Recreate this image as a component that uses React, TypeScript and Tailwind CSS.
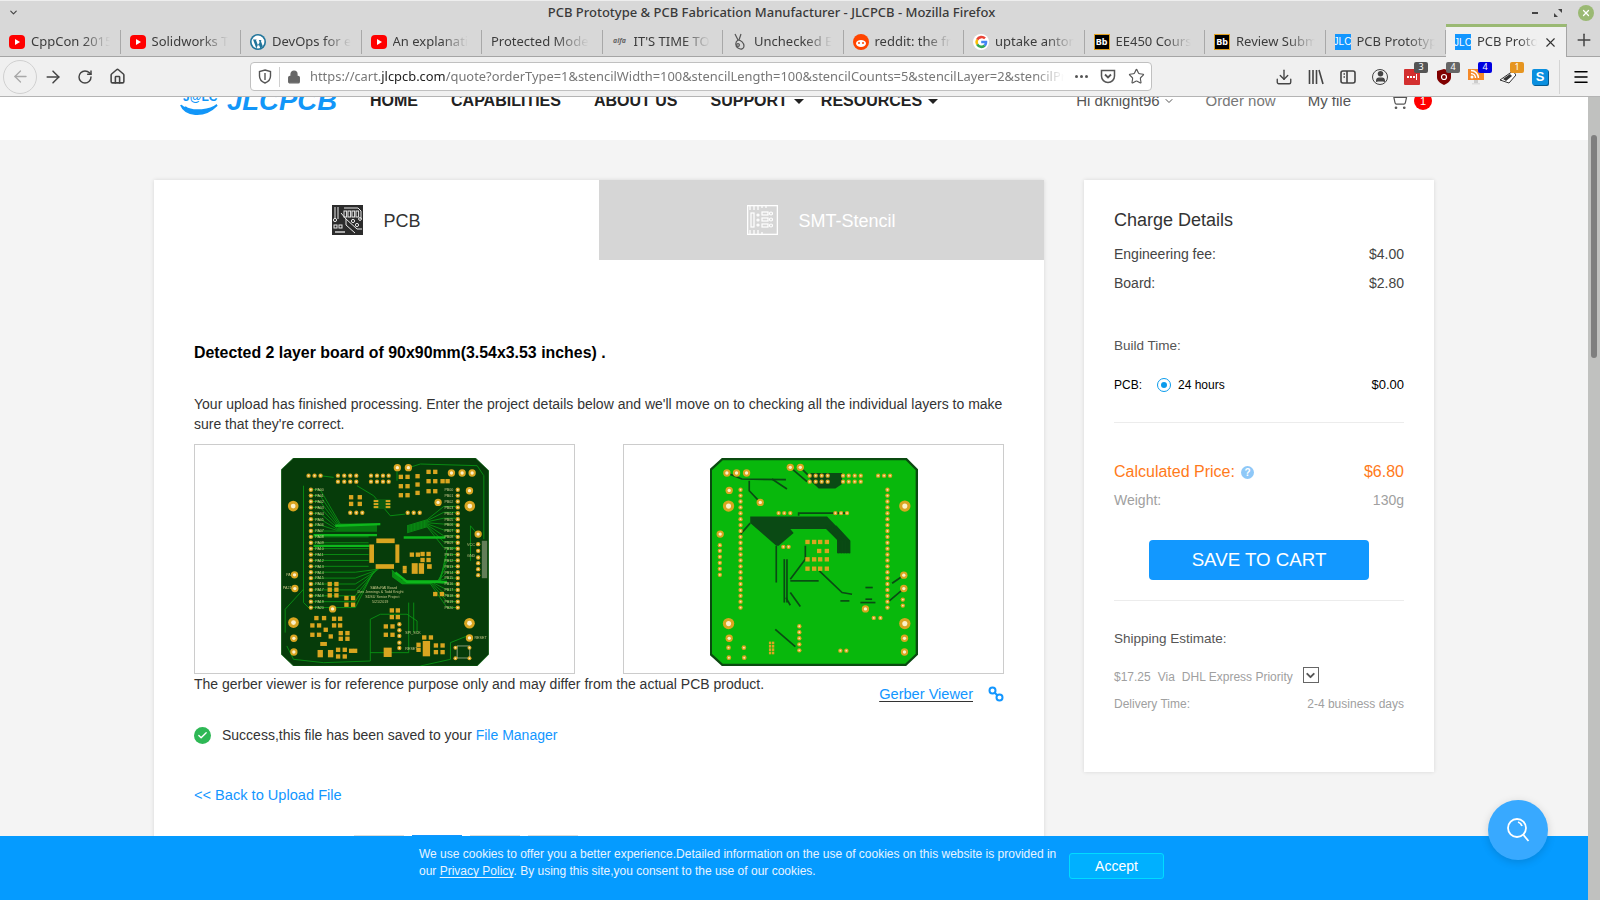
import {
  ArrowLeft,
  ArrowRight,
  RotateCw,
  Home,
  Lock,
  Star,
  Download,
  User,
  Menu,
  X,
  Plus,
  ChevronDown,
  ShoppingCart,
  Check,
} from "lucide-react";

const sans = "font-['Liberation_Sans',Arial,sans-serif]";
const ui = "font-['Noto_Sans',sans-serif]";

function YouTubeIcon() {
  return (
    <svg width="16" height="16" viewBox="0 0 16 16">
      <rect x="0" y="1" width="16" height="14" rx="4" fill="#f00" />
      <path d="M6 5l5 3-5 3z" fill="#fff" />
    </svg>
  );
}

function WordpressIcon() {
  return (
    <svg width="16" height="16" viewBox="0 0 16 16">
      <circle cx="8" cy="8" r="8" fill="#21759b" />
      <circle cx="8" cy="8" r="6.4" fill="#fff" />
      <path d="M3 5.5h4l-1 .6 2.2 6 1.4-4-.8-2h3l-1 .6 2 5.5-2.4 2.4-2-5-2 5-3-8z" fill="#21759b" />
    </svg>
  );
}

function AlfaIcon() {
  return (
    <span className="flex w-[16px] justify-center text-[7px] font-bold italic text-[#666]">alfa</span>
  );
}

function BadgerIcon() {
  return (
    <svg width="16" height="18" viewBox="0 0 16 18" fill="none" stroke="#555" strokeWidth="1.2">
      <path d="M3 1l3 6M9 1l-2 6M6 7c-3 2-3 6 0 8s6 1 6-2-3-6-6-6z" />
      <circle cx="6" cy="12" r="1.4" />
    </svg>
  );
}

function RedditIcon() {
  return (
    <svg width="16" height="16" viewBox="0 0 16 16">
      <circle cx="8" cy="8" r="8" fill="#ff4500" />
      <ellipse cx="8" cy="9.5" rx="5" ry="3.4" fill="#fff" />
      <circle cx="6" cy="9" r="1" fill="#ff4500" />
      <circle cx="10" cy="9" r="1" fill="#ff4500" />
    </svg>
  );
}

function GoogleIcon() {
  return (
    <svg width="16" height="16" viewBox="0 0 16 16" fill="none" strokeWidth="2.6">
      <circle cx="8" cy="8" r="8" fill="#fff" />
      <path d="M12 4.4A5 5 0 0 0 4.2 5.6" stroke="#ea4335" />
      <path d="M4.2 5.6a5 5 0 0 0 0 4.8" stroke="#fbbc05" />
      <path d="M4.2 10.4a5 5 0 0 0 7.6 1.2" stroke="#34a853" />
      <path d="M11.8 11.6A5 5 0 0 0 13 8H8.2" stroke="#4285f4" />
    </svg>
  );
}

function BlackboardIcon() {
  return (
    <span className="flex h-[16px] w-[16px] items-center justify-center border border-[#e0a020] bg-black text-[9px] font-bold text-white">
      Bb
    </span>
  );
}

function JlcIcon() {
  return (
    <span className={`${sans} flex h-[16px] w-[16px] shrink-0 items-center justify-center overflow-hidden bg-[#1296ff] text-[10px] text-white`}>
      JLC
    </span>
  );
}

const tabs = [
  { title: "CppCon 2015", icon: <YouTubeIcon /> },
  { title: "Solidworks T", icon: <YouTubeIcon /> },
  { title: "DevOps for e", icon: <WordpressIcon /> },
  { title: "An explanati", icon: <YouTubeIcon /> },
  { title: "Protected Mode", icon: null },
  { title: "IT'S TIME TO", icon: <AlfaIcon /> },
  { title: "Unchecked E", icon: <BadgerIcon /> },
  { title: "reddit: the fr", icon: <RedditIcon /> },
  { title: "uptake anton", icon: <GoogleIcon /> },
  { title: "EE450 Cours", icon: <BlackboardIcon /> },
  { title: "Review Subm", icon: <BlackboardIcon /> },
  { title: "PCB Prototyp", icon: <JlcIcon /> },
];

function Gold({ x, y, r = 6.5 }: { x: number; y: number; r?: number }) {
  return (
    <g>
      <circle cx={x} cy={y} r={r} fill="#d9a520" />
      <circle cx={x} cy={y} r={r * 0.42} fill="#f6e6b0" />
    </g>
  );
}

function Hole({ x, y, r = 14 }: { x: number; y: number; r?: number }) {
  return (
    <g>
      <circle cx={x} cy={y} r={r} fill="#d9a520" />
      <circle cx={x} cy={y} r={r * 0.45} fill="#fbf1c8" />
    </g>
  );
}

function Smd({ x, y, w = 13, h = 13 }: { x: number; y: number; w?: number; h?: number }) {
  return <rect x={x} y={y} width={w} height={h} fill="#d9a520" />;
}

const padRows = Array.from({ length: 21 }, (_, i) => 132 + i * 17.65);

const topSmds = [
  [385, 87], [405, 87], [385, 115], [405, 115], [385, 142], [405, 142], [468, 72], [488, 72], [468, 100], [488, 100],
  [468, 130], [488, 130], [435, 85], [435, 110], [435, 135], [510, 100], [525, 100], [236, 148], [262, 148], [236, 168], [262, 168],
  [172, 408], [192, 408], [172, 425], [192, 425], [172, 442], [192, 442], [222, 450], [242, 450], [222, 470], [242, 470],
  [418, 320], [436, 320], [450, 318], [468, 318], [450, 336], [468, 336], [488, 438], [508, 438],
  [358, 487], [376, 487], [358, 507], [376, 507], [132, 510], [155, 510], [120, 532], [140, 532], [120, 560], [140, 560],
  [185, 512], [203, 512], [185, 532], [203, 532], [160, 545], [175, 565], [205, 555], [225, 555], [205, 572], [225, 572],
  [340, 535], [360, 535], [340, 560], [360, 560], [490, 592], [510, 592], [490, 612], [510, 612], [455, 568], [475, 568],
  [438, 590], [438, 605], [197, 605], [217, 605], [197, 625], [217, 625], [236, 608], [248, 608],
];

function TopBoard() {
  return (
    <svg width="208" height="208" viewBox="33 37 622 623">
      <polygon points="70,37 615,37 655,75 655,625 620,660 70,660 33,625 33,72" fill="#063c0a" stroke="#0f6a14" strokeWidth="2" />
      <g fill="none" stroke="#0a9a14" strokeWidth="2.5">
        {padRows.slice(0, 8).map((y, i) => (
          <polyline key={`a${i}`} points={`122,${y} 150,${y} ${210 - i * 2},${235 + i * 3} 320,${235 + i * 3}`} />
        ))}
        {padRows.slice(8, 14).map((y, i) => (
          <polyline key={`b${i}`} points={`122,${y} 295,${y}`} />
        ))}
        {padRows.slice(14).map((y, i) => (
          <polyline key={`c${i}`} points={`122,${y} 255,${y} ${325 - i * 3},${370 + i * 2}`} />
        ))}
        {padRows.slice(0, 8).map((y, i) => (
          <polyline key={`d${i}`} points={`562,${y + 50} 520,${y + 50} 470,${222 + i * 3} 410,${240 + i * 3}`} />
        ))}
        {padRows.slice(10).map((y, i) => (
          <polyline key={`e${i}`} points={`562,${y} 530,${y} ${510 - i * 3},${404 + i} 395,${404 + i} 365,${372 + i * 2}`} />
        ))}
        <polyline points="100,120 100,470 120,490" />
        <polyline points="45,560 45,490 100,430" />
        <polyline points="50,600 70,640 160,650 300,645 300,520 330,505 410,505 440,525 440,560" />
        <polyline points="450,660 540,640 540,590 590,570" />
        <polyline points="625,270 600,240 600,345" />
        <polyline points="415,66 450,55 620,60 640,90 640,280" />
        <polyline points="380,66 380,105" />
        <polyline points="150,90 190,95" />
        <polyline points="260,120 310,150 360,210 405,205" />
        <polyline points="300,620 415,620 415,470" />
        <polyline points="430,470 430,560" />
      </g>
      <g fill="none" stroke="#0eb81c" strokeWidth="7">
        <polyline points="130,268 320,268" />
        <polyline points="130,300 297,300" />
        <polyline points="400,275 525,275" />
        <polyline points="195,240 330,235" />
        <polyline points="375,380 410,408 530,408" />
      </g>
      <g fill="#eadfa0" fontSize="11" fontFamily="Liberation Sans, sans-serif" opacity="0.85">
        {padRows.map((y, i) => (
          <text key={i} x="135" y={y + 4}>{`PA${String(i).padStart(2, "0")}`}</text>
        ))}
        {padRows.map((y, i) => (
          <text key={i} x="522" y={y + 4}>{`PB${String(i).padStart(2, "0")}`}</text>
        ))}
        <text x="262" y="442">Dev Jennings & Todd Knight</text>
        <text x="300" y="430">SAMuRAI Board</text>
        <text x="285" y="456">SDSU Senior Project</text>
        <text x="305" y="470">5/21/2019</text>
        <text x="590" y="300">VCC</text>
        <text x="590" y="335">GND</text>
        <text x="48" y="390">PA20</text>
        <text x="38" y="430">PA21</text>
        <text x="405" y="563">SPI_SCK</text>
        <text x="405" y="612">RESET</text>
        <text x="612" y="578">RESET</text>
      </g>
      {padRows.map((y) => (
        <g key={y}>
          <Gold x={122} y={y} />
          <Gold x={562} y={y} />
        </g>
      ))}
      {[115, 133, 151, 203, 222, 240, 258, 302, 320, 338, 355].map((x) => (
        <Gold key={x} x={x} y={90} />
      ))}
      {[203, 222, 240, 258, 302, 320, 338, 355].map((x) => (
        <Gold key={x} x={x} y={108} />
      ))}
      {[240, 258, 276, 412, 430, 448].map((x) => (
        <Gold key={x} x={x} y={201} />
      ))}
      {[295, 315, 335, 352, 370, 388].map((y) => (
        <Gold key={y} x={623} y={y} />
      ))}
      <rect x="634" y="285" width="16" height="112" fill="#8a9a7a" opacity="0.7" />
      {[535, 553, 570, 590, 606].map((y) => (
        <Gold key={y} x={387} y={y} />
      ))}
      {[[381, 66], [414, 66], [543, 82], [575, 82], [605, 82], [597, 135], [503, 170], [623, 265], [73, 387], [74, 428], [187, 489], [71, 577], [597, 576], [71, 618]].map(([x, y]) => (
        <Hole key={`${x}-${y}`} x={x} y={y} r={11} />
      ))}
      {[[69, 181], [598, 181], [70, 530], [597, 532]].map(([x, y]) => (
        <Hole key={`${x}-${y}`} x={x} y={y} r={16} />
      ))}
      <rect x="318" y="278" width="55" height="14" fill="#d9a520" />
      <rect x="297" y="296" width="14" height="55" fill="#d9a520" />
      <rect x="375" y="296" width="12" height="55" fill="#d9a520" />
      <rect x="316" y="355" width="55" height="14" fill="#d9a520" />
      <rect x="310" y="160" width="50" height="30" fill="#0c5a10" />
      {[163, 172, 181].map((y) => (
        <g key={y}>
          <Smd x={310} y={y} w={14} h={6} />
          <Smd x={346} y={y} w={14} h={6} />
        </g>
      ))}
      <Smd x={424} y={352} w={18} h={32} />
      <Smd x={445} y={352} w={16} h={32} />
      <Smd x={470} y={355} w={14} h={14} />
      <Smd x={397} y={360} w={12} h={12} />
      <Smd x={397} y={372} w={12} h={10} />
      <Smd x={340} y={605} w={24} h={28} />
      {[[142, 612], [173, 612]].map(([x, y]) => (
        <Smd key={x} x={x} y={y} w={16} h={22} />
      ))}
      <Smd x={150} y={588} w={20} h={12} />
      <Smd x={457} y={585} w={22} h={46} />
      {topSmds.map(([x, y]) => (
        <Smd key={`${x}-${y}`} x={x} y={y} />
      ))}
      <g fill="none" stroke="#bfc7a8" strokeWidth="2">
        <rect x="560" y="600" width="38" height="36" />
      </g>
      {[[555, 605], [597, 605], [555, 637], [597, 637]].map(([x, y]) => (
        <Gold key={`${x}-${y}`} x={x} y={y} r={6} />
      ))}
    </svg>
  );
}

function BottomBoard() {
  return (
    <svg width="208" height="208" viewBox="45 37 622 623">
      <polygon points="82,40 632,40 664,72 664,625 630,657 82,657 47,625 47,72" fill="#08b80c" stroke="#0a4a10" strokeWidth="7" />
      <polygon points="165,212 395,212 465,285 465,322 425,322 425,282 392,250 285,250 295,262 250,300 243,300 165,232" fill="#0a4a14" />
      <polygon points="345,82 440,82 440,115 420,128 370,128 345,105" fill="#0a4a14" />
      <g fill="none" stroke="#0a4a14" strokeWidth="5">
        <polyline points="95,82 140,100 272,102" />
        <polyline points="230,100 275,130" />
        <polyline points="162,105 162,135 195,170" />
        <polyline points="285,65 335,108" />
        <polyline points="315,65 358,108" />
        <polyline points="136,265 165,232" />
        <polyline points="310,210 310,202 450,202" />
        <polyline points="243,300 243,410" />
        <polyline points="267,340 267,470" />
        <polyline points="275,340 275,470" />
        <polyline points="285,405 370,405" />
        <polyline points="285,400 330,340 330,300" />
        <polyline points="285,440 315,482" />
        <polyline points="272,455 285,478" />
        <polyline points="372,375 440,440 470,445" />
        <polyline points="240,550 300,602" />
        <polyline points="510,425 532,425" />
        <polyline points="435,465 462,465" />
        <polyline points="495,470 540,470" />
        <polyline points="510,460 530,460" />
        <polyline points="625,388 590,412" />
        <polyline points="625,428 578,468" />
      </g>
      <g fill="none" stroke="#0a4a14" strokeWidth="3">
        {[430, 438, 446, 454, 462].map((x) => (
          <polyline key={x} points={`${x - 40},240 ${x},285 ${x},322`} />
        ))}
      </g>
      {padRows.map((y) => (
        <g key={y}>
          <Gold x={136} y={y} />
          <Gold x={576} y={y} />
        </g>
      ))}
      {[[95, 82], [124, 82], [154, 82], [285, 65], [315, 65], [102, 134], [195, 170], [75, 265], [625, 388], [625, 428], [510, 489], [102, 577], [627, 577], [627, 618]].map(([x, y]) => (
        <Hole key={`${x}-${y}`} x={x} y={y} r={11} />
      ))}
      {[[100, 181], [628, 181], [100, 533], [628, 533]].map(([x, y]) => (
        <Hole key={`${x}-${y}`} x={x} y={y} r={17} />
      ))}
      {[343, 361, 379, 397, 443, 460, 478, 496].map((x) => (
        <g key={x}>
          <Gold x={x} y={90} />
          <Gold x={x} y={108} />
        </g>
      ))}
      {[548, 566, 584, 250, 267, 285, 420, 437, 455].map((x) => (
        <Gold key={x} x={x} y={x > 500 ? 90 : 202} />
      ))}
      {[298, 315, 333, 351, 369, 387].map((y) => (
        <Gold key={y} x={74} y={y} />
      ))}
      {[541, 559, 577, 595, 613].map((y) => (
        <Gold key={y} x={312} y={y} />
      ))}
      {[[100, 605], [146, 605], [101, 635], [147, 635]].map(([x, y]) => (
        <Gold key={`${x}-${y}`} x={x} y={y} r={7} />
      ))}
      {[[535, 516], [555, 516], [435, 614], [453, 614], [622, 461], [622, 479], [264, 303], [280, 303]].map(([x, y]) => (
        <Gold key={`${x}-${y}`} x={x} y={y} />
      ))}
      {[[330, 282], [350, 282], [368, 282], [388, 282], [365, 309], [388, 309], [330, 334], [350, 334], [368, 334], [388, 334], [330, 362], [350, 362], [368, 362], [388, 362]].map(([x, y]) => (
        <Smd key={`${x}-${y}`} x={x} y={y} />
      ))}
      {[590, 600, 610, 620].map((y) => (
        <g key={y}>
          <Smd x={221} y={y - 3} w={7} h={8} />
          <Smd x={230} y={y - 3} w={7} h={8} />
        </g>
      ))}
    </svg>
  );
}

function ChipTabIcon() {
  return (
    <svg width="31" height="30" viewBox="0 0 31 30">
      <rect width="31" height="30" fill="#2b2b2b" />
      <g fill="none" stroke="#e8e8e8" strokeWidth="1">
        <path d="M3 2v12M6 2v12M9 8l5 6v6l9 8M14 2l0 0" />
        {[12, 16, 20, 24].map((x) => (
          <rect key={x} x={x} y="6" width="2.6" height="6" />
        ))}
        <path d="M12 3h14l3 3v8" />
        <circle cx="3" cy="15" r="1.6" />
        <circle cx="21" cy="16" r="1.6" />
        <circle cx="25" cy="20" r="1.6" />
        <circle cx="28" cy="14" r="1.4" />
        <rect x="2" y="20" width="3" height="3" />
        <rect x="7" y="20" width="3" height="3" />
        <path d="M14 14l11 10h5" />
      </g>
      <rect x="3" y="26" width="10" height="2" fill="#aaa" />
    </svg>
  );
}

function StencilTabIcon() {
  return (
    <svg width="31" height="30" viewBox="0 0 31 30" fill="none" stroke="#fff" strokeWidth="1.2">
      <rect x="0.6" y="0.6" width="29.8" height="28.8" strokeWidth="1.4" />
      <path d="M3 1v4M7 1v4M11 1v4M15 1v2M19 1v2M3 29v-4M7 29v-4M11 29v-4M15 29v-2" />
      <rect x="4" y="8" width="3" height="14" />
      <rect x="15" y="7" width="6" height="3" />
      <rect x="15" y="13" width="6" height="3" />
      <rect x="15" y="19" width="6" height="3" />
      <circle cx="24" cy="8.5" r="1.5" />
      <circle cx="24" cy="14.5" r="1.5" />
      <circle cx="24" cy="20.5" r="1.5" />
      <circle cx="11" cy="10" r="1" />
      <circle cx="11" cy="15" r="1" />
      <circle cx="11" cy="20" r="1" />
    </svg>
  );
}

function JlcLogo() {
  return (
    <div className="flex items-center">
      <svg width="44" height="36" viewBox="0 0 44 36" fill="none">
        <text x="3" y="18" fontSize="12" fontWeight="700" fontFamily="Liberation Sans, sans-serif" fill="#1296f8">J@LC</text>
        <path d="M1 22c4 10 22 14 36 0-6 5-24 8-32 2" fill="#1296f8" stroke="#1296f8" strokeWidth="2" />
      </svg>
      <span className={`${sans} ml-[3px] text-[27.5px] font-bold italic text-[#1296f8]`}>JLCPCB</span>
    </div>
  );
}

function ToolbarBadge({ value, color }: { value: string; color: string }) {
  return (
    <span
      className={`${ui} absolute -top-[7px] left-[10px] flex h-[11px] w-[14px] items-center justify-center rounded-[2px] text-[9px] text-white`}
      style={{ backgroundColor: color }}
    >
      {value}
    </span>
  );
}

function ExtIcon({ children, badge, color }: { children: React.ReactNode; badge?: string; color?: string }) {
  return (
    <div className="flex h-full w-[32px] items-center justify-center">
      <div className="relative flex h-[16px] w-[16px] items-center justify-center">
        {children}
        {badge && <ToolbarBadge value={badge} color={color ?? "#555"} />}
      </div>
    </div>
  );
}

function Chrome() {
  return (
    <div className={`${ui} shrink-0`}>
      <div className="flex h-[24px] items-center border-t border-[#eeeeee] bg-[#d8d8d8] pl-[8px] pr-[6px]">
        <ChevronDown size={11} strokeWidth={2.5} className="text-[#444]" />
        <div className="flex-1 pr-[8px] text-center text-[13px] font-medium text-[#3a3a3a]">
          PCB Prototype &amp; PCB Fabrication Manufacturer - JLCPCB - Mozilla Firefox
        </div>
        <div className="flex items-center gap-[16px]">
          <span className="h-[2px] w-[6px] bg-[#444]" />
          <svg width="8" height="8" viewBox="0 0 8 8" fill="#444">
            <path d="M4 0h4v4zM0 4l4 4H0z" />
          </svg>
          <span className="flex h-[16px] w-[16px] items-center justify-center rounded-full bg-[#9ab973]">
            <X size={10} strokeWidth={3} className="text-white" />
          </span>
        </div>
      </div>
      <div className="flex h-[33px] items-stretch border-b border-[#a5a5a5] bg-[#d8d8d8]">
        {tabs.map((tab, i) => (
          <div key={i} className="flex w-[120.5px] shrink-0 items-center pt-[3px]">
            <div className="flex h-[24px] w-full items-center gap-[6px] border-r border-[#a8a8a8] pl-[9px] pr-[10px]">
              {tab.icon && <span className="flex w-[16px] shrink-0 justify-center">{tab.icon}</span>}
              <span className="overflow-hidden whitespace-nowrap text-[13px] text-[#3c3c3c] [mask-image:linear-gradient(to_right,black_65%,transparent)]">
                {tab.title}
              </span>
            </div>
          </div>
        ))}
        <div className="-mb-[1px] flex w-[121px] shrink-0 items-center gap-[6px] border-t-[3px] border-r border-t-[#9ab973] border-r-[#a5a5a5] bg-[#f0f0f0] pl-[9px] pr-[8px]">
          <JlcIcon />
          <span className="flex-1 overflow-hidden whitespace-nowrap text-[13px] text-[#3c3c3c] [mask-image:linear-gradient(to_right,black_70%,transparent)]">
            PCB Proto
          </span>
          <X size={15} strokeWidth={1.8} className="shrink-0 text-[#333]" />
        </div>
        <div className="flex flex-1 items-center justify-center">
          <Plus size={20} strokeWidth={1.8} className="text-[#444]" />
        </div>
      </div>
      <div className="flex h-[40px] items-center border-b border-[#b4b4b4] bg-[#f0f0f0] pl-[3px]">
        <div className="flex h-[34px] w-[34px] items-center justify-center rounded-full border border-[#d0d0d0]">
          <ArrowLeft size={19} strokeWidth={1.6} className="text-[#a8a8a8]" />
        </div>
        <div className="flex w-[32px] justify-center">
          <ArrowRight size={20} strokeWidth={1.8} className="text-[#444]" />
        </div>
        <div className="flex w-[32px] justify-center">
          <RotateCw size={16} strokeWidth={2.2} className="text-[#444]" />
        </div>
        <div className="flex w-[32px] justify-center">
          <Home size={17} strokeWidth={2.2} className="text-[#444]" />
        </div>
        <div className="ml-[117px] flex h-[29px] w-[902px] shrink-0 items-center rounded-[4px] border border-[#c0c0c0] bg-white pl-[7px] pr-[6px]">
          <svg width="14" height="15" viewBox="0 0 14 15" fill="none" stroke="#555" strokeWidth="1.4">
            <path d="M7 1l5.5 1.6V7c0 3.4-2.4 5.8-5.5 7C3.900 12.800 1.500 10.400 1.500 7V2.600z" />
            <path d="M7 4v7" strokeWidth="2" stroke="#888" />
          </svg>
          <span className="ml-[7px] h-[20px] w-px bg-[#cfcfcf]" />
          <Lock size={14} strokeWidth={2.4} className="ml-[7px] fill-[#666] text-[#666]" />
          <div className="ml-[9px] w-[754px] overflow-hidden whitespace-nowrap text-[12.9px] text-[#777] [mask-image:linear-gradient(to_right,black_96%,transparent)]">
            https://cart.<span className="text-[#222]">jlcpcb.com</span>
            /quote?orderType=1&amp;stencilWidth=100&amp;stencilLength=100&amp;stencilCounts=5&amp;stencilLayer=2&amp;stencilProduct=1
          </div>
          <div className="ml-auto flex items-center gap-[12px] text-[#555]">
            <span className="flex gap-[2px]">
              <span className="h-[3px] w-[3px] rounded-full bg-[#555]" />
              <span className="h-[3px] w-[3px] rounded-full bg-[#555]" />
              <span className="h-[3px] w-[3px] rounded-full bg-[#555]" />
            </span>
            <svg width="16" height="15" viewBox="0 0 16 15" fill="none" stroke="#555" strokeWidth="1.5">
              <path d="M1.500 1.500h13V7a6.500 6.500 0 0 1-13 0z" />
              <path d="M5 5.500L8 8.500 11 5.500" strokeWidth="1.800" />
            </svg>
            <Star size={17} strokeWidth={1.6} />
          </div>
        </div>
        <div className="ml-[116px] flex h-full items-center text-[#444]">
          <div className="flex w-[32px] justify-center">
            <Download size={18} strokeWidth={1.8} />
          </div>
          <div className="flex w-[32px] justify-center">
            <svg width="16" height="16" viewBox="0 0 16 16" fill="none" stroke="#444" strokeWidth="1.6">
              <path d="M1.500 1v14M5 1v14M8.500 1v14M11 1l4 14" />
            </svg>
          </div>
          <div className="flex w-[32px] justify-center">
            <svg width="16" height="14" viewBox="0 0 16 14" fill="none" stroke="#444" strokeWidth="1.6">
              <rect x="1" y="1" width="14" height="12" rx="2" />
              <path d="M7 1v12M3.500 4h1.500M3.500 7h1.500" />
            </svg>
          </div>
          <div className="flex w-[32px] justify-center">
            <span className="flex h-[16px] w-[16px] items-center justify-center overflow-hidden rounded-full border-[1.5px] border-[#444]">
              <User size={13} strokeWidth={2.4} className="fill-[#444]" />
            </span>
          </div>
          <ExtIcon badge="3" color="#555">
            <span className="flex h-[16px] w-[16px] items-center justify-center gap-[1px] rounded-[1px] bg-[#d32f2f]">
              <span className="h-[2px] w-[2px] bg-white" />
              <span className="h-[2px] w-[2px] bg-white" />
              <span className="h-[2px] w-[2px] bg-white" />
              <span className="h-[6px] w-[1px] bg-white" />
            </span>
          </ExtIcon>
          <ExtIcon badge="4" color="#666">
            <svg width="14" height="16" viewBox="0 0 14 16">
              <path d="M7 0l7 2v6c0 4-3 6-7 8-4-2-7-4-7-8V2z" fill="#800000" />
              <circle cx="7" cy="8" r="2.500" fill="none" stroke="#fff" strokeWidth="1.200" />
            </svg>
          </ExtIcon>
          <ExtIcon badge="4" color="#0000e0">
            <svg width="16" height="16" viewBox="0 0 16 16">
              <rect width="16" height="11" fill="#f58a2a" />
              <circle cx="4" cy="8" r="1.500" fill="#fff" />
              <path d="M3 4.500a4.500 4.500 0 0 1 4.500 4.500M3 1.500a7.500 7.500 0 0 1 7.500 7.500" fill="none" stroke="#fff" strokeWidth="1.400" />
              <rect x="6" y="11" width="4" height="3" fill="#ccc" />
              <rect x="4" y="14" width="8" height="1.500" fill="#ddd" />
            </svg>
          </ExtIcon>
          <ExtIcon badge="1" color="#e69520">
            <svg width="16" height="16" viewBox="0 0 16 16">
              <path d="M0 11L13 2l3 4-7 8z" fill="#fff" stroke="#333" strokeWidth="1" />
              <path d="M3 10l7-5 2 2-6 5z" fill="#333" />
            </svg>
          </ExtIcon>
          <ExtIcon>
            <span className={`${sans} flex h-[16px] w-[16px] items-center justify-center rounded-[2px] bg-[#0a8fdf] text-[13px] font-bold text-white shadow-[1px_1px_0_#055a90]`}>
              S
            </span>
          </ExtIcon>
        </div>
        <span className="ml-[3px] h-[34px] w-px bg-[#d4d4d4]" />
        <div className="ml-[12px]">
          <Menu size={18} strokeWidth={2} />
        </div>
      </div>
    </div>
  );
}

function ChargeRow({ label, value, className }: { label: React.ReactNode; value: string; className: string }) {
  return (
    <div className={`flex items-center justify-between ${className}`}>
      <span>{label}</span>
      <span>{value}</span>
    </div>
  );
}

function ChargeCard() {
  return (
    <aside className="h-[592px] w-[350px] shrink-0 bg-white px-[30px] pt-[30px] shadow-[0_0_4px_rgba(0,0,0,0.12)]">
      <h2 className="text-[18px] leading-[20px] text-[#333]">Charge Details</h2>
      <ChargeRow label="Engineering fee:" value="$4.00" className="mt-[14px] h-[20px] text-[14px] text-[#444]" />
      <ChargeRow label="Board:" value="$2.80" className="mt-[9px] h-[20px] text-[14px] text-[#444]" />
      <div className="mt-[43px] h-[20px] text-[13.5px] leading-[20px] text-[#555]">Build Time:</div>
      <div className="mt-[19px] flex h-[20px] items-center text-black">
        <span className="text-[12px]">PCB:</span>
        <span className="ml-[15px] flex h-[14px] w-[14px] items-center justify-center rounded-full border border-[#0a9bec]">
          <span className="h-[6px] w-[6px] rounded-full bg-[#0a9bec]" />
        </span>
        <span className="ml-[7px] text-[12px]">24 hours</span>
        <span className="ml-auto text-[13px]">$0.00</span>
      </div>
      <div className="mt-[27px] h-px bg-[#ececec]" />
      <div className="mt-[39px] flex h-[20px] items-center justify-between text-[16px] text-[#ff7a1a]">
        <span className="flex items-center gap-[6px]">
          Calculated Price:
          <span className="flex h-[13px] w-[13px] items-center justify-center rounded-full bg-[#8ec8f8] text-[10px] font-bold text-white">?</span>
        </span>
        <span>$6.80</span>
      </div>
      <ChargeRow label="Weight:" value="130g" className="mt-[8px] h-[20px] text-[14px] text-[#a0a0a0]" />
      <button className="mx-auto mt-[30px] block h-[40px] w-[220px] rounded-[4px] bg-[#1298ff] text-[18.7px] text-white">
        SAVE TO CART
      </button>
      <div className="mt-[20px] h-px bg-[#ececec]" />
      <div className="mt-[28px] h-[20px] text-[13.5px] leading-[20px] text-[#555]">Shipping Estimate:</div>
      <div className="mt-[18px] flex h-[20px] items-center text-[12px] text-[#a0a0a0]">
        <span>$17.25</span>
        <span className="ml-[7px]">Via</span>
        <span className="ml-[7px]">DHL Express Priority</span>
        <span className="ml-[10px] flex h-[16px] w-[16px] -translate-y-[2px] items-center justify-center border border-[#666]">
          <ChevronDown size={13} strokeWidth={3.5} className="text-[#555]" />
        </span>
      </div>
      <div className="mt-[7px] flex h-[20px] items-center justify-between text-[12px] text-[#a0a0a0]">
        <span>Delivery Time:</span>
        <span>2-4 business days</span>
      </div>
    </aside>
  );
}

function MainCard() {
  return (
    <section className="w-[890px] shrink-0 bg-white shadow-[0_0_4px_rgba(0,0,0,0.12)]">
      <div className="flex h-[80px]">
        <div className="flex w-1/2 items-center justify-center gap-[20px] text-[18px] text-[#333]">
          <ChipTabIcon />
          <span className="mt-[3px]">PCB</span>
        </div>
        <div className="flex w-1/2 items-center justify-center gap-[20px] bg-[#d6d6d6] text-[18px] text-white">
          <StencilTabIcon />
          <span className="mt-[3px]">SMT-Stencil</span>
        </div>
      </div>
      <div className="px-[40px] text-[14px] leading-[20px] text-[#333]">
        <h3 className="mt-[83px] text-[15.9px] font-bold text-black">Detected 2 layer board of 90x90mm(3.54x3.53 inches) .</h3>
        <p className="mt-[31px]">
          Your upload has finished processing. Enter the project details below and we'll move on to checking all the individual layers to make sure that they're correct.
        </p>
        <div className="mt-[10px] flex justify-between">
          <div className="flex h-[230px] w-[381px] items-center justify-center border border-[#cccccc] pt-[5px]">
            <TopBoard />
          </div>
          <div className="flex h-[230px] w-[381px] items-center justify-center border border-[#cccccc] pt-[5px]">
            <BottomBoard />
          </div>
        </div>
        <div className="flex items-start justify-between">
          <span>The gerber viewer is for reference purpose only and may differ from the actual PCB product.</span>
          <span className="mt-[10px] flex items-center">
            <span className="text-[14.6px] text-[#1296ff] underline decoration-[#333] underline-offset-2">Gerber Viewer</span>
            <svg className="ml-[15px]" width="16" height="16" viewBox="0 0 16 16" fill="none" stroke="#1296ff" strokeWidth="2">
              <circle cx="4.500" cy="4.500" r="3" />
              <circle cx="11.500" cy="11.500" r="3" />
              <path d="M6.500 6.500l3 3" />
            </svg>
          </span>
        </div>
        <div className="mt-[21px] flex h-[20px] items-center">
          <span className="flex h-[17px] w-[17px] items-center justify-center rounded-full bg-[#2eb855]">
            <Check size={11} strokeWidth={3} className="text-white" />
          </span>
          <span className="ml-[11px]">
            Success,this file has been saved to your <span className="text-[#1296ff]">File Manager</span>
          </span>
        </div>
        <div className="mt-[40px] text-[14.6px] text-[#1296ff]">&lt;&lt; Back to Upload File</div>
      </div>
      <div className="mt-[30px] ml-[200px] flex h-[40px] gap-[8px]">
        <span className="h-[3px] w-[50px] bg-[#dddddd]" />
        <span className="h-[3px] w-[50px] bg-[#1296ff]" />
        <span className="h-[3px] w-[50px] bg-[#dddddd]" />
        <span className="h-[3px] w-[50px] bg-[#dddddd]" />
      </div>
    </section>
  );
}

function PageHeader() {
  return (
    <header className="h-[43px] shrink-0 overflow-hidden bg-white">
      <div className="-mt-[16px] flex h-[40px] items-center pl-[180px] text-[16px]">
        <JlcLogo />
        <nav className="ml-[33px] flex items-center font-bold text-[#222]">
          <span>HOME</span>
          <span className="ml-[33px]">CAPABILITIES</span>
          <span className="ml-[33px]">ABOUT US</span>
          <span className="ml-[33px]">SUPPORT</span>
          <span className="ml-[6px] h-0 w-0 border-x-[5px] border-t-[5px] border-x-transparent border-t-[#222]" />
          <span className="ml-[17px]">RESOURCES</span>
          <span className="ml-[6px] h-0 w-0 border-x-[5px] border-t-[5px] border-x-transparent border-t-[#222]" />
        </nav>
        <div className="ml-[138px] flex items-center text-[15px] text-[#555]">
          <span className="flex items-center gap-[3px]">
            Hi dknight96
            <ChevronDown size={12} />
          </span>
          <span className="ml-[31px] text-[#777]">Order now</span>
          <span className="ml-[32px]">My file</span>
          <ShoppingCart size={18} strokeWidth={1.6} className="ml-[39px]" />
          <span className="ml-[6px] flex h-[18px] w-[18px] items-center justify-center rounded-full bg-[#f00] text-[11px] text-white">1</span>
        </div>
      </div>
    </header>
  );
}

export default function App() {
  return (
    <div className={`${sans} flex h-[900px] w-[1600px] flex-col overflow-hidden bg-[#f4f4f4]`}>
      <Chrome />
      <div className="flex min-h-0 flex-1">
        <div className="relative min-w-0 flex-1 overflow-hidden">
          <PageHeader />
          <main className="flex gap-[40px] pl-[154px] pt-[40px]">
            <MainCard />
            <ChargeCard />
          </main>
          <div className="absolute inset-x-0 bottom-0 flex h-[64px] bg-[#059bff] pl-[419px] pt-[10px] text-[12px] leading-[17px] text-[#e8f4ff]">
            <p className="w-[640px]">
              We use cookies to offer you a better experience.Detailed information on the use of cookies on this website is provided in our{" "}
              <span className="underline underline-offset-2">Privacy Policy</span>. By using this site,you consent to the use of our cookies.
            </p>
            <button className="ml-[10px] mt-[7px] h-[26px] w-[95px] rounded-[3px] border border-[#00dcff] bg-[#00b0ff] text-[14px] text-white">
              Accept
            </button>
          </div>
          <div className="absolute bottom-[40px] left-[1488px] flex h-[60px] w-[60px] items-center justify-center rounded-full bg-[#38a9ff] shadow-[0_2px_8px_rgba(0,0,0,0.15)]">
            <svg width="24" height="26" viewBox="0 0 24 26" fill="none" stroke="#fff" strokeWidth="1.800">
              <circle cx="11" cy="11" r="9" />
              <path d="M17.500 18l5 6" />
              <path d="M12 5a6 6 0 0 1 4 4" />
            </svg>
          </div>
        </div>
        <div className="w-[12px] shrink-0 bg-[#c0c1bf] pl-[3px] pt-[38px]">
          <div className="h-[223px] w-[6px] rounded-[3px] bg-[#7f7f7f]" />
        </div>
      </div>
    </div>
  );
}
